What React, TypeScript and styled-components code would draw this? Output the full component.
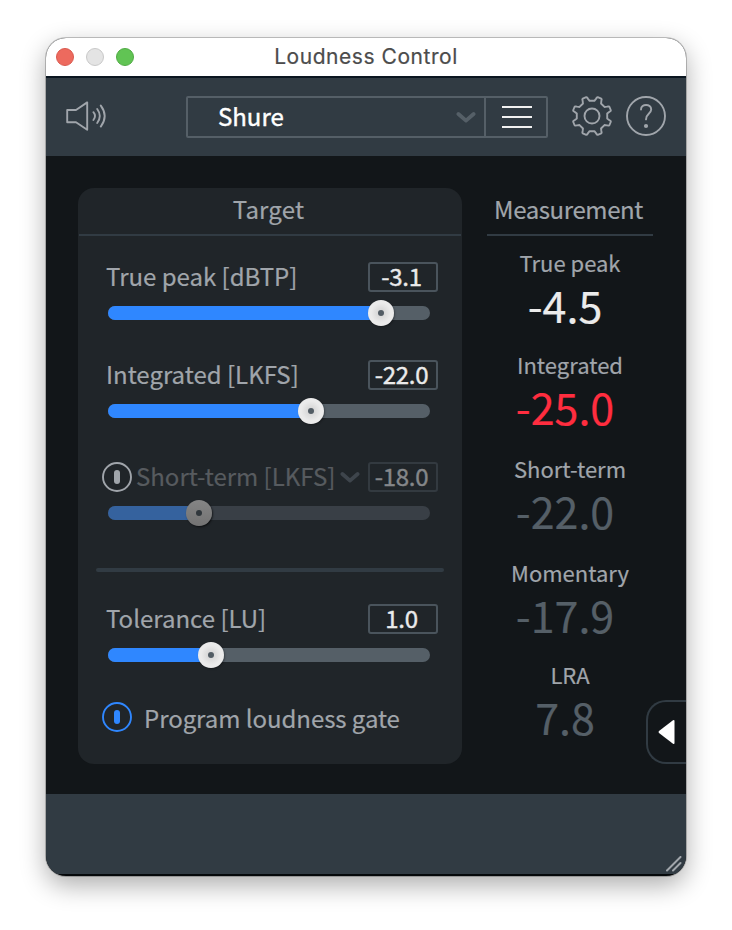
import React from "react";
import styled, { createGlobalStyle } from "styled-components";

const color = {
  bar: "#313b43",
  main: "#121619",
  panel: "#202529",
  line: "#313b43",
  text: "#a0a5ab",
  dimText: "#575b5f",
  track: "#555f67",
  dimTrack: "#393f46",
  blue: "#2f87ff",
  dimBlue: "#35629e",
  light: "#ebebeb",
  red: "#ff2d3f",
};

const GlobalStyle = createGlobalStyle`
  * { box-sizing: border-box; }
  body {
    margin: 0;
    background: #fff;
    font-family: "Noto Sans CJK SC", "Noto Sans", sans-serif;
  }
  svg { display: block; flex: none; }
`;

const Desktop = styled.div`
  height: 930px;
  padding: 38px 46px;
  overflow: hidden;
`;

const Window = styled.div`
  position: relative;
  display: flex;
  flex-direction: column;
  width: 640px;
  height: 838px;
  overflow: hidden;
  border-radius: 20px;
  background: #05080a;
  box-shadow: 0 0 0 1px rgba(0, 0, 0, 0.22), 0 9px 26px rgba(0, 0, 0, 0.33);
`;

const TitleBar = styled.header`
  display: grid;
  grid-template-columns: 100px 1fr 100px;
  align-items: center;
  height: 38px;
  background: #fff;
`;

const Lights = styled.div`
  display: flex;
  gap: 12px;
  padding-left: 10px;
`;

const Light = styled.span<{ $fill: string; $edge: string }>`
  width: 18px;
  height: 18px;
  border-radius: 50%;
  border: 1px solid ${(p) => p.$edge};
  background: ${(p) => p.$fill};
`;

const Title = styled.h1`
  margin: 0;
  text-align: center;
  font: 400 21px/36px Inter, sans-serif;
  letter-spacing: 0.55px;
  -webkit-text-stroke: 0.2px currentColor;
  color: #4c4c4c;
`;

const Toolbar = styled.div`
  display: flex;
  align-items: center;
  height: 80px;
  padding: 0 20px;
  border-top: 2px solid #0b1620;
  background: ${color.bar};
`;

const Preset = styled.div`
  display: flex;
  flex: none;
  width: 362px;
  height: 42px;
  margin: 0 24px 0 78px;
  border: 2px solid ${color.track};
  border-radius: 2px;
`;

const PresetName = styled.div`
  display: flex;
  flex: 1;
  align-items: center;
  justify-content: space-between;
  padding: 0 8px 0 30px;
  border-right: 2px solid ${color.track};
  font-size: 24px;
  line-height: 36px;
  color: #fff;
`;

const PresetText = styled.span`
  padding-bottom: 2px;
  -webkit-text-stroke: 0.4px currentColor;
`;

const MenuButton = styled.div`
  display: grid;
  place-content: center;
  width: 60px;
  padding-left: 2px;
`;

const ToolIcons = styled.div`
  display: flex;
  gap: 14px;
  margin-bottom: 2px;
`;

const Main = styled.main`
  display: flex;
  height: 638px;
  padding: 32px 0 0 32px;
  background: ${color.main};
`;

const Footer = styled.footer`
  display: flex;
  align-items: flex-end;
  justify-content: flex-end;
  height: 80px;
  padding: 0 3px 1px 0;
  background: ${color.bar};
`;

const Panel = styled.section`
  display: flex;
  flex-direction: column;
  width: 384px;
  height: 576px;
  border-radius: 16px;
  background: ${color.panel};
`;

const PanelHeader = styled.h2`
  height: 48px;
  margin: 0 1px;
  padding: 4px 3px 0 0;
  border-bottom: 2px solid ${color.line};
  text-align: center;
  font-size: 24px;
  font-weight: 400;
  line-height: 34px;
  letter-spacing: 0.2px;
  -webkit-text-stroke: 0.2px currentColor;
  color: ${color.text};
`;

const Control = styled.div<{ $gap: number }>`
  display: flex;
  flex-direction: column;
  gap: 14px;
  margin: ${(p) => p.$gap}px 24px 0 28px;
`;

const ControlRow = styled.div`
  display: flex;
  align-items: center;
  height: 30px;
`;

const Label = styled.span<{ $dim?: boolean }>`
  font-size: 24px;
  line-height: 28px;
  padding-bottom: 2px;
  white-space: nowrap;
  -webkit-text-stroke: 0.2px currentColor;
  color: ${(p) => (p.$dim ? color.dimText : color.text)};
`;

const PowerSlot = styled.span`
  margin: 0 4px 0 -4px;
`;

const ArrowSlot = styled.span`
  margin-left: 5px;
`;

const ValueBox = styled.span<{ $dim?: boolean }>`
  width: 70px;
  height: 30px;
  margin-left: auto;
  border: 2px solid ${(p) => (p.$dim ? "#333a40" : "#4a545c")};
  border-radius: 3px;
  padding-right: 1px;
  text-align: center;
  font-size: 24px;
  line-height: 24px;
  letter-spacing: -0.3px;
  text-indent: -2px;
  -webkit-text-stroke: 0.4px currentColor;
  color: ${(p) => (p.$dim ? "#85878a" : color.light)};
`;

const Slider = styled.div<{ $dim?: boolean }>`
  display: flex;
  align-items: center;
  width: 322px;
  height: 14px;
  margin-left: 2px;
  border-radius: 7px;
  background: ${(p) => (p.$dim ? color.dimTrack : color.track)};
`;

const Fill = styled.div<{ $dim?: boolean; $width: number }>`
  width: ${(p) => p.$width}px;
  height: 14px;
  border-radius: 7px 0 0 7px;
  background: ${(p) => (p.$dim ? color.dimBlue : color.blue)};
`;

const Knob = styled.div<{ $dim?: boolean }>`
  display: grid;
  place-content: center;
  width: 26px;
  height: 26px;
  margin-left: -13px;
  border-radius: 50%;
  background: ${(p) =>
    p.$dim
      ? "linear-gradient(#858585, #737373)"
      : "radial-gradient(circle, #d8d8d8 3px, #ebebeb 10px)"};
  box-shadow: 1px 1px 2px rgba(0, 0, 0, ${(p) => (p.$dim ? 0.6 : 0.3)});

  &::after {
    content: "";
    width: 6px;
    height: 6px;
    border-radius: 50%;
    background: ${(p) => (p.$dim ? "#30373c" : "#525c64")};
  }
`;

const Divider = styled.hr`
  width: 348px;
  height: 4px;
  margin: 48px 18px 0;
  border: 0;
  border-radius: 2px;
  background: ${color.line};
`;

const Gate = styled.div`
  display: flex;
  gap: 10px;
  height: 34px;
  margin: 40px 24px 0;
`;

const GateLabel = styled(Label)`
  padding: 2px 0 0 2px;
  letter-spacing: -0.05px;
`;

const Measurements = styled.section`
  display: flex;
  flex-direction: column;
  width: 166px;
  margin-left: 25px;
`;

const MeasureHeader = styled(PanelHeader)`
  margin: 0 0 11px;
  padding-right: 3px;
  letter-spacing: -0.4px;
`;

const Reading = styled.div<{ $height: number }>`
  height: ${(p) => p.$height}px;
  text-align: center;
`;

const ReadingLabel = styled.div`
  font-size: 22px;
  line-height: 30px;
  -webkit-text-stroke: 0.2px currentColor;
  color: ${color.text};
`;

const ReadingValue = styled.div<{ $tone: string }>`
  padding: 1px 10px 0 0;
  font-size: 43px;
  line-height: 52px;
  -webkit-text-stroke: 0.2px currentColor;
  color: ${(p) => p.$tone};
`;

const DrawerTab = styled.div`
  position: absolute;
  right: 0;
  top: 662px;
  display: grid;
  align-content: center;
  width: 40px;
  height: 64px;
  padding-left: 10px;
  border: 2px solid ${color.line};
  border-right: 0;
  border-radius: 20px 0 0 20px;
  background: ${color.main};
`;

const polar = (deg: number, r: number) => {
  const a = (deg * Math.PI) / 180;
  return `${(21 + r * Math.sin(a)).toFixed(2)} ${(21 - r * Math.cos(a)).toFixed(2)}`;
};

const gearPath =
  "M" +
  Array.from({ length: 8 }, (_, i) => i * 45)
    .flatMap((a) => [
      polar(a - 9, 15.4),
      polar(a + 9, 15.4),
      polar(a + 13, 17.6),
      polar(a + 15, 19.3),
      polar(a + 17, 19.7),
      polar(a + 28, 19.7),
      polar(a + 30, 19.3),
      polar(a + 32, 17.6),
    ])
    .join("L") +
  "Z";

const SpeakerIcon = () => (
  <svg width="42" height="34" viewBox="0 0 42 34" fill="none" stroke={color.text} strokeWidth="1.9" strokeLinejoin="round" strokeLinecap="round">
    <path d="M1.2 10H10L21.2 2.4V29.8L10 22.2H1.2Z" />
    <path d="M27.4 12.2Q30.6 16 27.4 20" />
    <path d="M31.2 9Q36.4 16 31.2 23" />
    <path d="M34.8 5.6Q42.6 16 34.8 26.6" />
  </svg>
);

const GearIcon = () => (
  <svg width="40" height="40" viewBox="1 1 40 40" fill="none" stroke={color.text} strokeWidth="1.9" strokeLinejoin="round">
    <path d={gearPath} />
    <circle cx="21" cy="21" r="7.5" />
  </svg>
);

const HelpIcon = () => (
  <svg width="40" height="40" viewBox="0 0 40 40" fill="none" stroke={color.text} strokeWidth="1.9" strokeLinecap="round">
    <circle cx="20" cy="20" r="19" />
    <path d="M15 13.6C15 7.4 25.2 7.4 25.2 13.6C25.2 17.6 20 17.6 20 23.4" />
    <circle cx="20" cy="30" r="2.1" fill={color.text} stroke="none" />
  </svg>
);

const Chevron = ({ tone }: { tone: string }) => (
  <svg width="20" height="12" viewBox="0 0 20 12" fill="none" stroke={tone} strokeWidth="3.8" strokeLinecap="round" strokeLinejoin="round">
    <path d="M2.4 3L10 9.6L17.6 3" />
  </svg>
);

const PowerIcon = ({ tone }: { tone: string }) => (
  <svg width="30" height="30" viewBox="0 0 30 30">
    <circle cx="15" cy="15" r="14" fill="none" stroke={tone} strokeWidth="1.9" />
    <rect x="12" y="8" width="6" height="14" rx="3" fill={tone} />
  </svg>
);

interface TargetProps {
  label: string;
  value: string;
  fill: number;
  gap: number;
  dim?: boolean;
}

const Target = ({ label, value, fill, gap, dim }: TargetProps) => (
  <Control $gap={gap}>
    <ControlRow>
      {dim && (
        <PowerSlot>
          <PowerIcon tone={color.text} />
        </PowerSlot>
      )}
      <Label $dim={dim}>{label}</Label>
      {dim && (
        <ArrowSlot>
          <Chevron tone="#3e454c" />
        </ArrowSlot>
      )}
      <ValueBox $dim={dim}>{value}</ValueBox>
    </ControlRow>
    <Slider $dim={dim}>
      <Fill $dim={dim} $width={fill} />
      <Knob $dim={dim} />
    </Slider>
  </Control>
);

const readings = [
  { label: "True peak", value: "-4.5", tone: color.light, height: 102 },
  { label: "Integrated", value: "-25.0", tone: color.red, height: 104 },
  { label: "Short-term", value: "-22.0", tone: color.track, height: 104 },
  { label: "Momentary", value: "-17.9", tone: color.track, height: 102 },
  { label: "LRA", value: "7.8", tone: color.track, height: 90 },
];

export default function App() {
  return (
    <>
      <GlobalStyle />
      <Desktop>
        <Window>
          <TitleBar>
            <Lights>
              <Light $fill="#ed6a5e" $edge="#d9594e" />
              <Light $fill="#e4e4e4" $edge="#c8c8c8" />
              <Light $fill="#61c454" $edge="#50aa44" />
            </Lights>
            <Title>Loudness Control</Title>
          </TitleBar>
          <Toolbar>
            <SpeakerIcon />
            <Preset>
              <PresetName>
                <PresetText>Shure</PresetText>
                <Chevron tone={color.track} />
              </PresetName>
              <MenuButton>
                <svg width="30" height="22" viewBox="0 0 30 22" fill="#f0f0f0">
                  <rect width="30" height="2" />
                  <rect y="10" width="30" height="2" />
                  <rect y="20" width="30" height="2" />
                </svg>
              </MenuButton>
            </Preset>
            <ToolIcons>
              <GearIcon />
              <HelpIcon />
            </ToolIcons>
          </Toolbar>
          <Main>
            <Panel>
              <PanelHeader>Target</PanelHeader>
              <Target label="True peak [dBTP]" value="-3.1" fill={273} gap={26} />
              <Target label="Integrated [LKFS]" value="-22.0" fill={203} gap={40} />
              <Target label="Short-term [LKFS]" value="-18.0" fill={91} gap={44} dim />
              <Divider />
              <Target label="Tolerance [LU]" value="1.0" fill={103} gap={32} />
              <Gate>
                <PowerIcon tone={color.blue} />
                <GateLabel>Program loudness gate</GateLabel>
              </Gate>
            </Panel>
            <Measurements>
              <MeasureHeader>Measurement</MeasureHeader>
              {readings.map((r) => (
                <Reading key={r.label} $height={r.height}>
                  <ReadingLabel>{r.label}</ReadingLabel>
                  <ReadingValue $tone={r.tone}>{r.value}</ReadingValue>
                </Reading>
              ))}
            </Measurements>
          </Main>
          <Footer>
            <svg width="18" height="17" viewBox="0 0 18 17" stroke="#a0a5ab" strokeWidth="2" strokeLinecap="round">
              <path d="M2 14.5L15.5 1M8 14.5L15.5 7" />
            </svg>
          </Footer>
          <DrawerTab>
            <svg width="17" height="26" viewBox="0 0 17 26" fill="#fff">
              <path d="M1 12L15 1.3Q16.5 .5 16.5 2V24Q16.5 25.5 15 24.7L1 14Q0 13 1 12Z" />
            </svg>
          </DrawerTab>
        </Window>
      </Desktop>
    </>
  );
}
